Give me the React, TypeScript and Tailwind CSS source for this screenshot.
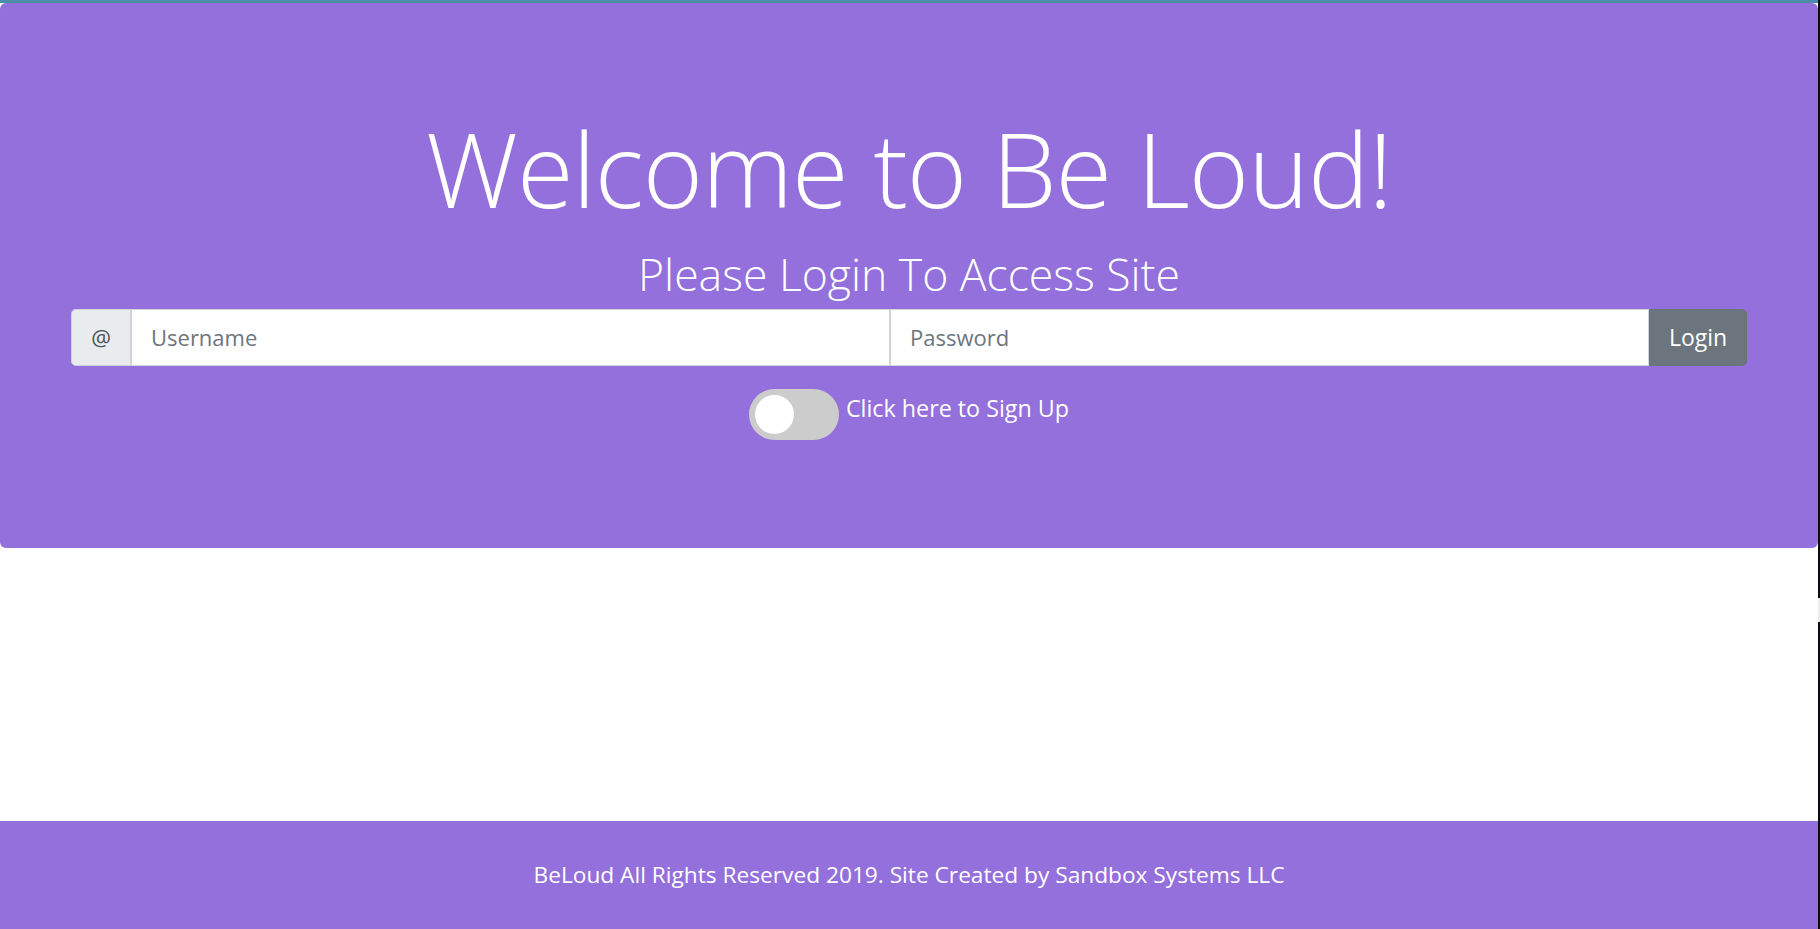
import React, { useState } from 'react';

const App: React.FC = () => {
  const [signUp, setSignUp] = useState(false);

  return (
    <div className="flex min-h-screen bg-white" style={{ fontFamily: '"Open Sans", "Noto Sans", sans-serif' }}>
      <div className="flex flex-1 flex-col">
        <div className="h-[3px] bg-[#4a8caa]" />

        <section className="flex h-[545px] flex-col items-center rounded-[6px] bg-[#9370db] px-[71px] text-white">
          <h1 className="mt-[104px] text-[103px] font-light leading-[1.2] tracking-[-1px]">Welcome to Be Loud!</h1>
          <h2 className="mt-[16px] text-[44.5px] font-light leading-[1.2]">Please Login To Access Site</h2>

          <form className="mt-[9px] flex h-[57px] w-full" onSubmit={(e) => e.preventDefault()}>
            <span className="flex w-[61px] items-center justify-center rounded-l-[5px] border border-r-2 border-[#ced4da] bg-[#e9ecef] text-[22px] text-[#495057]">
              @
            </span>
            <input
              type="text"
              placeholder="Username"
              className="min-w-0 flex-1 border-y border-r-2 border-[#ced4da] bg-white px-[19px] text-[22px] text-[#495057] outline-none placeholder:text-[#6c757d]"
            />
            <input
              type="password"
              placeholder="Password"
              className="min-w-0 flex-1 border-y border-r border-[#ced4da] bg-white px-[19px] text-[22px] text-[#495057] outline-none placeholder:text-[#6c757d]"
            />
            <button
              type="submit"
              className="w-[98px] rounded-r-[5px] bg-[#6c757d] text-[23px] text-white"
            >
              Login
            </button>
          </form>

          <label className="mt-[23px] flex cursor-pointer items-center gap-[7px]">
            <button
              type="button"
              onClick={() => setSignUp(!signUp)}
              className={`flex h-[51px] w-[90px] items-center rounded-full px-[6px] ${signUp ? 'justify-end bg-[#2196f3]' : 'justify-start bg-[#cccccc]'}`}
            >
              <span className="h-[39px] w-[39px] rounded-full bg-white" />
            </button>
            <span className="pb-[12px] text-[23.3px]">Click here to Sign Up</span>
          </label>
        </section>

        <div className="flex-1" />

        <footer className="flex h-[108px] items-center justify-center bg-[#9370db] text-[22.7px] text-white">
          BeLoud All Rights Reserved 2019. Site Created by Sandbox Systems LLC
        </footer>
      </div>
      <div className="flex w-[2px] flex-col bg-[#0b0b12]">
        <div className="h-[598px]" />
        <div className="h-[24px] bg-[#ececec]" />
      </div>
    </div>
  );
};

export default App;
